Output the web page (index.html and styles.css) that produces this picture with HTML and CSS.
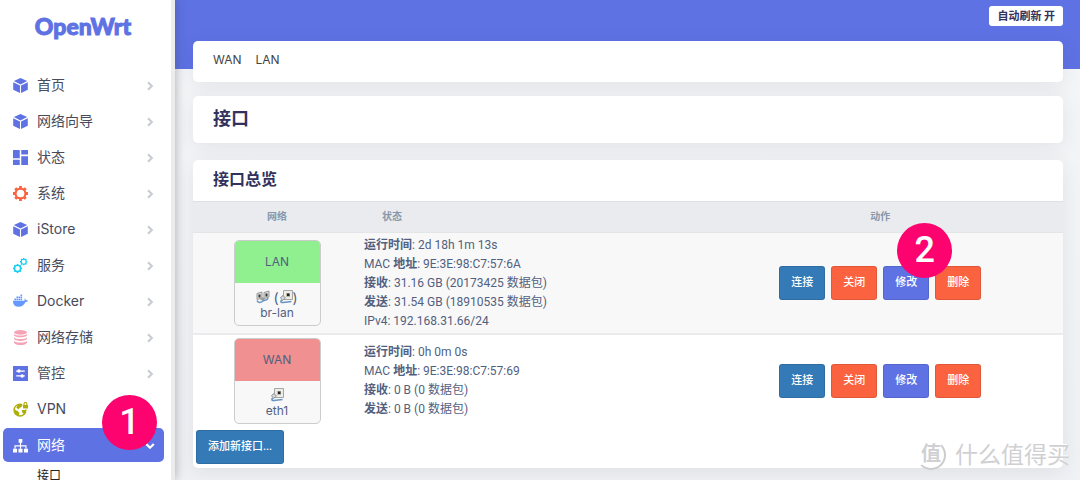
FILE: index.html
```html
<!DOCTYPE html>
<html lang="zh-CN">
<head>
<meta charset="utf-8">
<meta name="viewport" content="width=device-width, initial-scale=1">
<title>OpenWrt - 接口</title>
<link rel="stylesheet" href="styles.css">
</head>
<body>
<svg class="defs" aria-hidden="true">
  <symbol id="cube" viewBox="0 0 14 14"><path d="M7 0 13.200 2.900 7 6 .8 2.900ZM.2 3.900 6.500 7V14L.2 11ZM13.800 3.900 7.500 7V14L13.800 11Z"/></symbol>
  <symbol id="chevron" viewBox="0 0 8 10"><path d="M2 1.200 5.800 5 2 8.800" fill="none" stroke="currentColor" stroke-width="2.200"/></symbol>
  <symbol id="gear" viewBox="0 0 14 14"><circle cx="7" cy="7" r="4.600" fill="none" stroke="currentColor" stroke-width="2"/><g stroke="currentColor" stroke-width="2.600"><path d="M7 0v2.200M7 11.800V14M0 7h2.200M11.800 7H14M2.050 2.050 3.600 3.600M10.400 10.400l1.550 1.550M2.050 11.950 3.600 10.400M10.400 3.600l1.550-1.550"/></g></symbol>
  <symbol id="port" viewBox="0 0 14 14"><path d="M4.500.5h9v9h-9z" fill="#ececea" stroke="#a5a5a3"/><path d="M7 3h4v4H7z" fill="#bdb9a5"/><path d="M8 3.500h2.500v2.500H8z" fill="#222"/><path d="M1.500 7.500 4 5.500l2.500 2.500-3 2.500z" fill="#d4d6d8" stroke="#7c8184" stroke-width=".8"/><path d="M2.500 10Q.8 12.800 4 12.500L12.500 11.500" fill="none" stroke="#6795c2" stroke-width="1.600"/></symbol>
  <symbol id="bridge" viewBox="0 0 14 14"><path d="M1 3.500 6 2v6L1 9.500zM8 2.500 13 1v6L8 8.500z" fill="#dcdcda" stroke="#999"/><path d="M2.500 4.500h2v3h-2zM9.500 3.500h2v3h-2z" fill="#333"/><path d="M4 9.500 7 7l2 2-2 2z" fill="#9b9d98"/><path d="M1 10.500c1 3 4 2 6 .5s4 .5 5-3" fill="none" stroke="#6795c2" stroke-width="1.500"/></symbol>
</svg>
<div class="app">
  <aside class="sidebar">
    <a class="brand" href="#">OpenWrt</a>
    <nav class="menu">
      <a class="item" href="#"><svg class="icon indigo"><use href="#cube"/></svg><span>首页</span><svg class="arrow"><use href="#chevron"/></svg></a>
      <a class="item" href="#"><svg class="icon indigo"><use href="#cube"/></svg><span>网络向导</span><svg class="arrow"><use href="#chevron"/></svg></a>
      <a class="item" href="#"><svg class="icon indigo" viewBox="0 0 14 14"><path d="M0 0h6.300v7.700H0zM7.700 0H14v4.300H7.700zM0 9.200h6.300V14H0zM7.700 5.800H14V14H7.700z"/></svg><span>状态</span><svg class="arrow"><use href="#chevron"/></svg></a>
      <a class="item" href="#"><svg class="icon orange"><use href="#gear"/></svg><span>系统</span><svg class="arrow"><use href="#chevron"/></svg></a>
      <a class="item" href="#"><svg class="icon indigo"><use href="#cube"/></svg><span>iStore</span><svg class="arrow"><use href="#chevron"/></svg></a>
      <a class="item" href="#"><svg class="icon cyan" viewBox="0 0 14 14"><use href="#gear" x="0" y="5.500" width="8.500" height="8.500"/><use href="#gear" x="6.500" y="0" width="7" height="7"/></svg><span>服务</span><svg class="arrow"><use href="#chevron"/></svg></a>
      <a class="item" href="#"><svg class="icon docker" viewBox="0 0 14 14"><path d="M0 6.300h10.500c.6-.5.300-1.500.5-2.300.8.500 1 1.200 1 1.800.8-.1 1.500 0 2 .4-.5 1-1.300 1.300-2.400 1.300C10.500 10.500 8.400 12 5.200 12 1.500 12-.2 9.700 0 6.300zM1.300 4.200h1.500v1.600H1.300zM3.200 4.200h1.500v1.600H3.200zM5.100 4.200h1.500v1.600H5.100zM7 4.200h1.500v1.600H7zM3.200 2.300h1.500v1.500H3.200zM5.100 2.300h1.500v1.500H5.100zM7 2.300h1.500v1.500H7zM7 .4h1.500v1.500H7z"/></svg><span>Docker</span><svg class="arrow"><use href="#chevron"/></svg></a>
      <a class="item" href="#"><svg class="icon pink" viewBox="0 0 14 14"><ellipse cx="7" cy="2.200" rx="6" ry="2.200"/><path d="M1 3.700c2 1.900 10 1.900 12 0v1.500c-1 2.200-11 2.200-12 0zM1 7c2 1.900 10 1.900 12 0v1.500c-1 2.200-11 2.200-12 0zM1 10.300c2 1.900 10 1.900 12 0v1.500c-1 2.900-11 2.900-12 0z"/></svg><span>网络存储</span><svg class="arrow"><use href="#chevron"/></svg></a>
      <a class="item" href="#"><svg class="icon indigo" viewBox="0 0 14 14"><path d="M0 0h14v14H0z"/><path d="M3 4.700h8M3 9.300h8" stroke="#fff" stroke-width="1.200"/><circle cx="5.500" cy="4.700" r="1.600" fill="#fff"/><circle cx="8.500" cy="9.300" r="1.600" fill="#fff"/></svg><span>管控</span><svg class="arrow"><use href="#chevron"/></svg></a>
      <a class="item" href="#"><svg class="icon olive" viewBox="0 0 14 14"><circle cx="6.500" cy="7.500" r="5.500" fill="none" stroke="currentColor" stroke-width="1.300"/><path d="M1 6 3 8l1.500.5L6 10.500 5.500 13 2 11zM5 2.300 8.300 2v2.500L6 5.500 5 7 3 5zM8 7.500l4 0-1 4-2-1z"/><path d="M8.800 0H14v7H8.800z" fill="#fff"/><path d="M9.300 2.800H14V6H9.300z"/><path d="M10.300 3V1.700a1.300 1.300 0 0 1 2.600 0V3" fill="none" stroke="currentColor"/></svg><span>VPN</span></a>
      <a class="item active" href="#"><svg class="icon" viewBox="0 0 14 14"><path d="M5.300 1h3.400v3.400H5.300zM0 10h3.800v3.600H0zM5.100 10h3.800v3.600H5.100zM10.200 10H14v3.600h-3.800z"/><path d="M7 4v6M1.900 10V7.300h10.200V10" fill="none" stroke="currentColor" stroke-width="1.100"/></svg><span>网络</span><svg class="arrow open"><use href="#chevron"/></svg></a>
      <a class="subitem" href="#">接口</a>
    </nav>
    <span class="step step-one">1</span>
  </aside>

  <main class="main">
    <header class="topbar"><button class="refresh" type="button">自动刷新 开</button></header>
    <nav class="card tabs"><a href="#">WAN</a><a href="#">LAN</a></nav>
    <section class="card title"><h1>接口</h1></section>
    <section class="card overview">
      <h2>接口总览</h2>
      <table class="interfaces">
        <thead><tr><th class="col-net">网络</th><th class="col-status">状态</th><th class="col-actions">动作</th></tr></thead>
        <tbody>
          <tr class="shaded">
            <td><div class="zone"><div class="zone-head lan">LAN</div><div class="zone-body"><div class="ports"><svg class="port"><use href="#bridge"/></svg><span class="group">(<svg class="port"><use href="#port"/></svg>)</span></div>br-lan</div></div></td>
            <td class="status"><b>运行时间</b>: 2d 18h 1m 13s<br>MAC <b>地址</b>: 9E:3E:98:C7:57:6A<br><b>接收</b>: 31.16 GB (20173425 数据包)<br><b>发送</b>: 31.54 GB (18910535 数据包)<br>IPv4: 192.168.31.66/24</td>
            <td><div class="actions"><button class="btn blue" type="button">连接</button><button class="btn red" type="button">关闭</button><span class="marked"><button class="btn violet" type="button">修改</button><span class="step step-two">2</span></span><button class="btn red" type="button">删除</button></div></td>
          </tr>
          <tr>
            <td><div class="zone"><div class="zone-head wan">WAN</div><div class="zone-body"><div class="ports"><svg class="port"><use href="#port"/></svg></div>eth1</div></div></td>
            <td class="status"><b>运行时间</b>: 0h 0m 0s<br>MAC <b>地址</b>: 9E:3E:98:C7:57:69<br><b>接收</b>: 0 B (0 数据包)<br><b>发送</b>: 0 B (0 数据包)</td>
            <td><div class="actions"><button class="btn blue" type="button">连接</button><button class="btn red" type="button">关闭</button><button class="btn violet" type="button">修改</button><button class="btn red" type="button">删除</button></div></td>
          </tr>
        </tbody>
      </table>
      <button class="btn blue add" type="button">添加新接口...</button>
    </section>
  </main>
</div>
<div class="watermark"><span class="seal">值</span><span>什么值得买</span></div>
</body>
</html>
```
FILE: styles.css
```css
* { box-sizing: border-box; }
body {
  margin: 0;
  height: 100vh;
  overflow: hidden;
  font: 12px/20px "Inter", "Noto Sans CJK SC", sans-serif;
  color: #525f7f;
  background: #f0f1f4;
}
a { color: inherit; text-decoration: none; }
button { font: inherit; cursor: pointer; }
.defs { position: absolute; width: 0; height: 0; }
.app { display: flex; min-height: 100vh; }

.sidebar {
  position: relative;
  z-index: 1;
  flex: none;
  width: 175px;
  height: 100vh;
  overflow: hidden;
  background: #fff;
  border-right: 4px solid #ececec;
  box-shadow: 0 0 10px rgba(60, 60, 70, 0.4);
}
.brand {
  display: block;
  height: 68px;
  padding: 11px 5px 0 0;
  text-align: center;
  font: 900 23px/30px "Lato", sans-serif;
  color: #5e72e4;
  -webkit-text-stroke: 1px #5e72e4;
}
.menu { display: flex; flex-direction: column; gap: 2px; padding: 0 7px 0 3px; }
.item {
  display: flex;
  align-items: center;
  height: 34px;
  padding: 0 10px;
  border-radius: 5px;
  font-size: 14px;
  color: #484b5c;
}
.item span { flex: 1; }
.item.active { background: #5e72e4; color: #fff; }
.icon { width: 15px; height: 15px; margin-right: 9px; fill: currentColor; }
.arrow { width: 8px; height: 10px; margin-top: 2px; color: #c9cdd6; }
.arrow.open { color: #fff; transform: rotate(90deg); }
.indigo { color: #5e72e4; }
.orange { color: #fb6340; }
.cyan { color: #11cdef; }
.docker { color: #6699ff; }
.pink { color: #f5a3b5; }
.olive { color: #adad08; }
.subitem { padding: 2px 34px; color: #222; }

.step {
  position: absolute;
  z-index: 2;
  width: 55px;
  height: 55px;
  border-radius: 50%;
  background: #fc036f;
  color: #fff;
  text-align: center;
  font: 500 36px/55px "Roboto", sans-serif;
}
.step-one { left: 102px; top: 395px; }
.step-two { left: 14px; bottom: 22px; }

.main {
  flex: 1;
  min-width: 0;
  padding: 0 17px 0 18px;
  background: linear-gradient(#5e72e4 69px, #f4f5f7 69px, #f0f1f4);
}
.topbar { display: flex; justify-content: flex-end; padding: 6px 0 15px; }
.refresh {
  height: 20px;
  padding: 0 8px;
  border: 0;
  border-radius: 3px;
  background: #fff;
  color: #32325d;
  font-size: 11px;
  font-weight: 700;
  line-height: 20px;
}
.card {
  border-radius: 5px;
  background: #fff;
  box-shadow: 0 4px 20px rgba(50, 60, 80, 0.09);
}
.tabs { display: flex; gap: 14px; height: 41px; padding: 9px 20px; color: #444; }
.title { margin-top: 14px; padding: 11px 20px 12px; }
h1, h2 { margin: 0; color: #32325d; font-weight: 700; }
h1 { font-size: 18px; line-height: 24px; }
h2 { padding: 7px 20px 10px; font-size: 16px; line-height: 24px; }
.overview { margin-top: 17px; padding-bottom: 4px; }

.interfaces { width: 100%; border-collapse: collapse; table-layout: fixed; }
.interfaces th {
  height: 31px;
  padding: 0 0 2px;
  background: #e9ebef;
  border-top: 1px solid #dee0e5;
  border-bottom: 1px solid #e3e5e9;
  color: #8898aa;
  font-size: 10px;
  line-height: 16px;
}
.interfaces .col-net { width: 168px; }
.interfaces .col-status { padding-left: 21px; text-align: left; }
.interfaces .col-actions { width: 42%; }
.interfaces td { padding: 3px 0; }
.interfaces .shaded td { padding: 7px 0; }
.shaded { background: #f8f8f8; border-bottom: 2px solid #ebebed; }
.interfaces td.status, .interfaces .shaded td.status {
  padding: 0 3px;
  font-family: "Roboto", "Noto Sans CJK SC", sans-serif;
  line-height: 19px;
}
.status b { font-weight: 700; }
.zone {
  width: 87px;
  margin: 0 auto;
  overflow: hidden;
  border: 1px solid #ccc;
  border-radius: 5px;
  background: #f8f8f8;
  text-align: center;
}
.zone-head { height: 42px; line-height: 42px; }
.lan { background: #90f090; }
.wan { background: #f09090; }
.zone-body { padding: 6px 0 5px; line-height: 15px; }
.ports { display: flex; align-items: center; justify-content: center; gap: 3px; height: 16px; }
.group { display: flex; align-items: center; font-size: 14px; }
.port { width: 14px; height: 14px; }

.actions { display: flex; justify-content: center; gap: 6px; }
.marked { position: relative; display: flex; }
.btn {
  height: 34px;
  padding: 0 11px;
  border: 1px solid rgba(0, 0, 0, 0.1);
  border-radius: 3px;
  color: #fff;
  font-family: "Roboto", "Noto Sans CJK SC", sans-serif;
  font-size: 11px;
  font-weight: 500;
  white-space: nowrap;
}
.blue { background: #337ab7; }
.red { background: #fb6340; }
.violet { background: #5e72e4; }
.add { display: block; margin: 3px 0 0 3px; }

.watermark {
  position: absolute;
  right: 10px;
  bottom: 10px;
  display: flex;
  align-items: center;
  gap: 9px;
  color: #d0d0d3;
  font-size: 23px;
  line-height: 30px;
  text-shadow: -1px -1px 0 #fff;
  pointer-events: none;
}
.seal {
  width: 30px;
  height: 30px;
  border: 2px solid #ddd;
  border-color: #fff #ccc #ccc #fff;
  border-radius: 50%;
  text-align: center;
  font-weight: 700;
  font-size: 20px;
  line-height: 25px;
}
```
